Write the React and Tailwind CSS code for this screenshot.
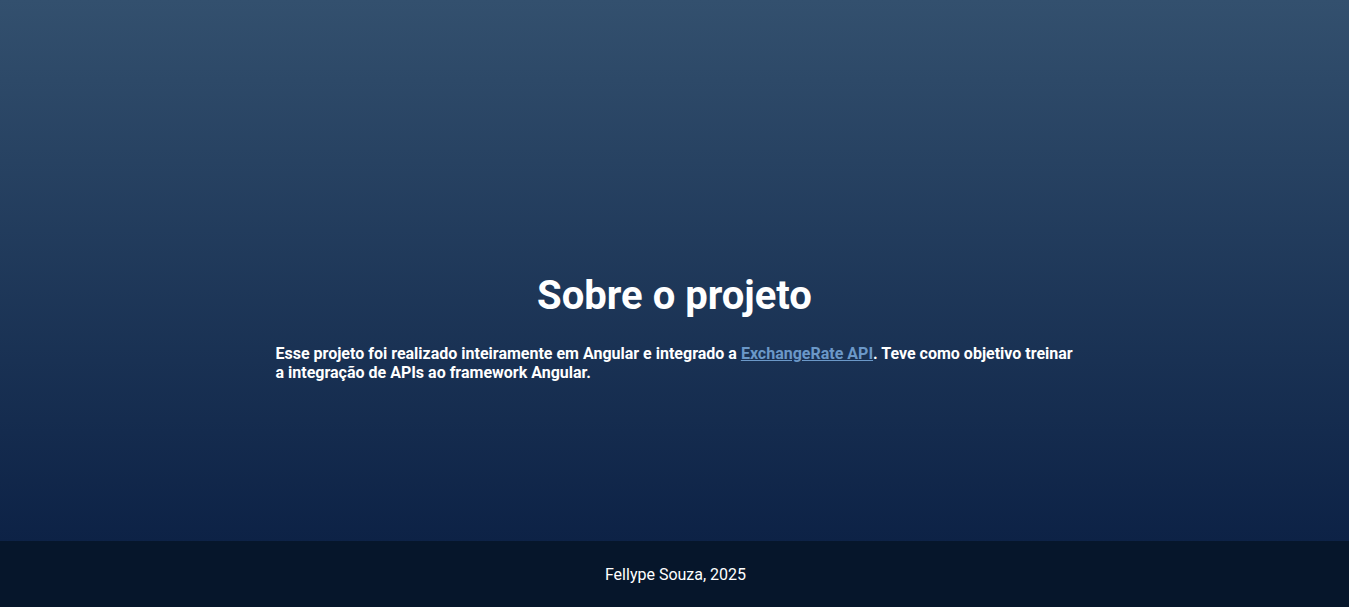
import React from 'react';

export default function App() {
  return (
    <div className="min-h-screen flex flex-col font-['Roboto',sans-serif] text-white">
      <main className="h-[541px] bg-gradient-to-b from-[#33506e] to-[#0d2246] flex flex-col items-center pt-[272px]">
        <h1 className="text-[40px] font-bold leading-[47px] mb-[25px]">Sobre o projeto</h1>
        <p className="w-[802px] pl-[2px] text-base font-bold leading-[19px]">
          Esse projeto foi realizado inteiramente em Angular e integrado a{' '}
          <a href="#" className="text-[#6b98c8] underline">ExchangeRate API</a>. Teve como objetivo treinar a integração de APIs ao framework Angular.
        </p>
      </main>
      <footer className="h-[66px] bg-[#06162b] flex items-center justify-center text-base pt-[2px] pl-[2px]">
        Fellype Souza, 2025
      </footer>
    </div>
  );
}
